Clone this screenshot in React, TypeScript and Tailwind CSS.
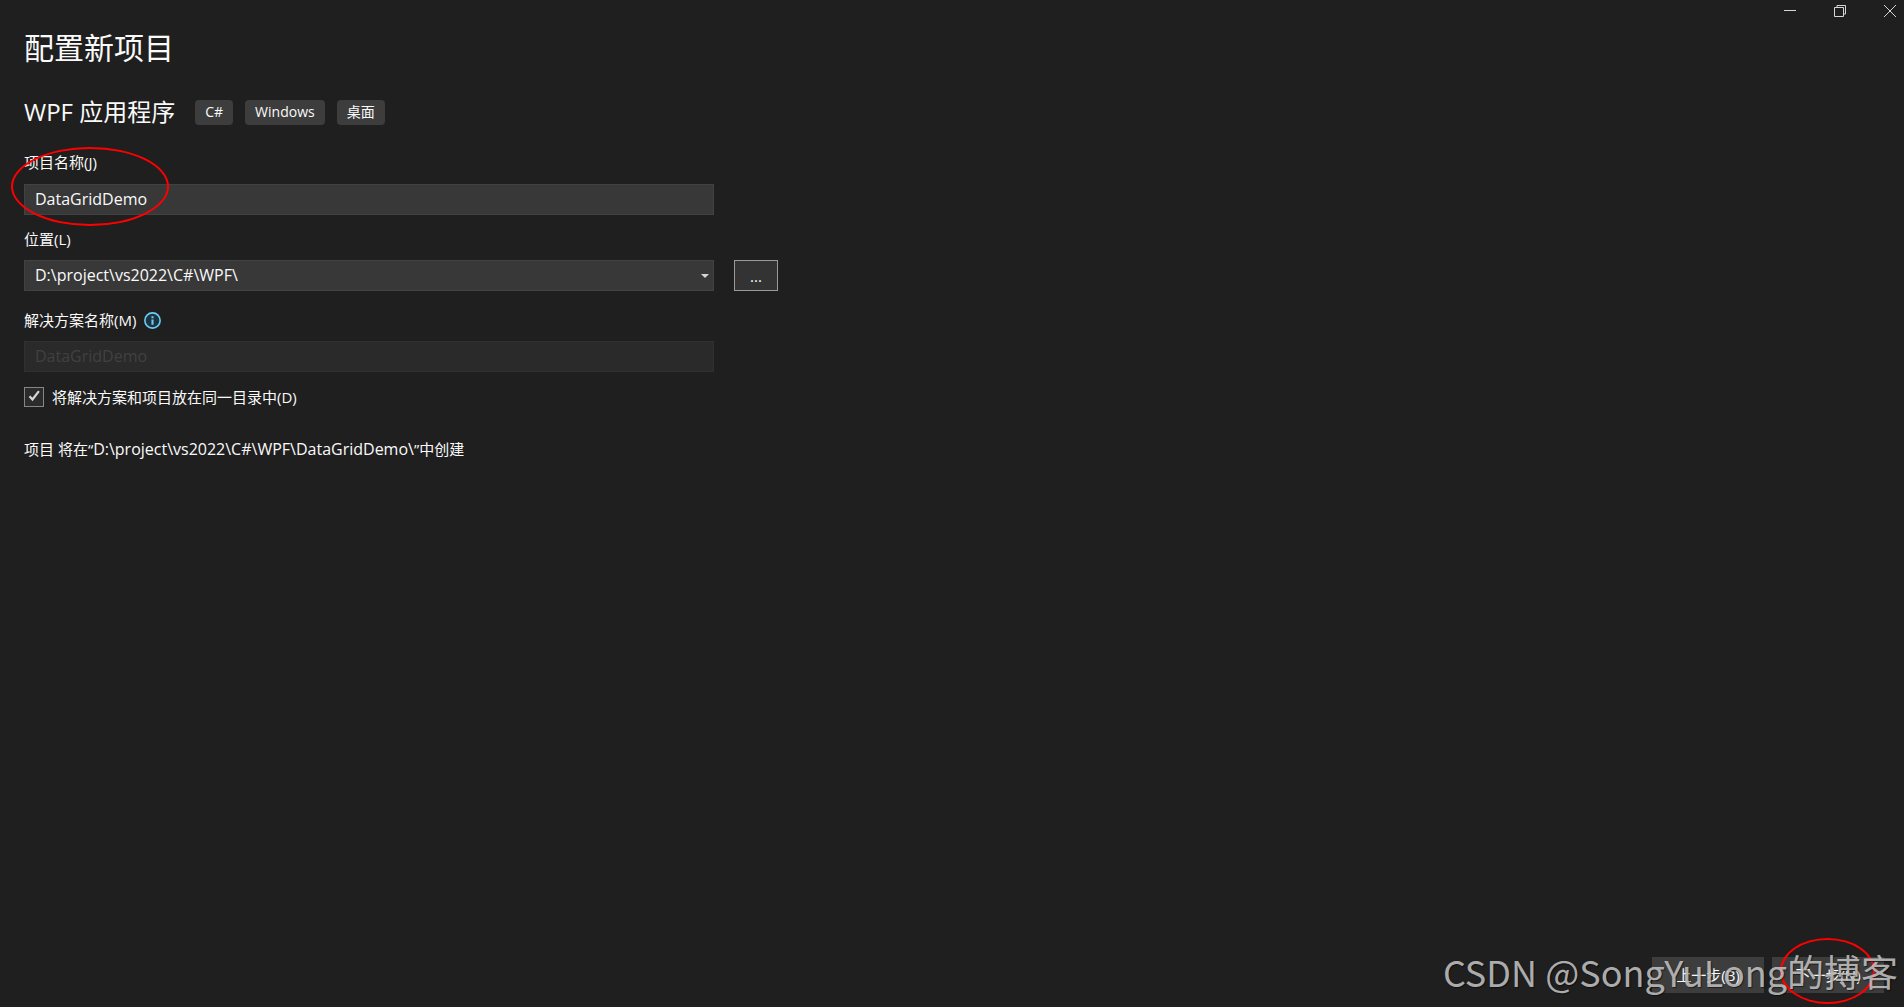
import { useState } from "react";
import type { ReactNode } from "react";

const TAGS = ["C#", "Windows", "桌面"];
const LOCATIONS = ["D:\\project\\vs2022\\C#\\WPF\\"];

const fieldClass =
    "block h-[31px] w-full border border-[#424242] bg-[#383838] px-2.5 pb-0.5 text-base leading-5 text-[#fafafa] outline-none";

function WindowButton({ label, children }: { label: string; children: ReactNode }) {
    return (
        <button type="button" aria-label={label} className="flex h-[22px] w-7 items-center justify-center text-[#d6d6d6] hover:bg-[#3d3d3d]">
            <svg width="12" height="12" viewBox="0 0 12 12" fill="none" stroke="currentColor">
                {children}
            </svg>
        </button>
    );
}

function TitleBar() {
    return (
        <div className="flex h-[22px] justify-end gap-[22px]">
            <WindowButton label="最小化">
                <path d="M0 5.5h12" />
            </WindowButton>
            <WindowButton label="还原">
                <path d="M.5 2.5h9v9h-9zM3 2V.5h8.5v8.5H10" />
            </WindowButton>
            <WindowButton label="关闭">
                <path d="M0 0l12 12M12 0l-12 12" />
            </WindowButton>
        </div>
    );
}

function InfoIcon() {
    return (
        <svg width="17" height="17" viewBox="0 0 16 16" fill="none" aria-hidden="true">
            <circle cx="8" cy="8" r="7.2" fill="#1b3440" stroke="#6ccbf5" strokeWidth="1.5" />
            <path d="M7 4h2v1.8H7zM7 7h2v5H7z" fill="#6ccbf5" />
        </svg>
    );
}

export default function App() {
    const [name, setName] = useState("DataGridDemo");
    const [location, setLocation] = useState(LOCATIONS[0]);
    const [sameFolder, setSameFolder] = useState(true);

    return (
        <div className="relative flex min-h-screen flex-col overflow-hidden bg-[#1f1f1f] font-['Open_Sans','Noto_Sans_CJK_SC',sans-serif] text-[15px] leading-5 text-[#fafafa]">
            <TitleBar />

            <main className="flex-1 px-6 pt-1.5">
                <h1 className="text-[30px] leading-10">配置新项目</h1>

                <div className="mt-6 flex items-center gap-5">
                    <h2 className="text-2xl leading-10">WPF 应用程序</h2>
                    <ul className="flex gap-3">
                        {TAGS.map((tag) => (
                            <li key={tag} className="flex h-[25px] items-center rounded bg-[#3d3d3d] px-2.5 text-sm">
                                {tag}
                            </li>
                        ))}
                    </ul>
                </div>

                <form onSubmit={(e) => e.preventDefault()}>
                    <div className="mt-5 max-w-[690px]">
                        <label htmlFor="project-name" className="block">项目名称(J)</label>
                        <input
                            id="project-name"
                            type="text"
                            value={name}
                            onChange={(e) => setName(e.target.value)}
                            className={`mt-3 ${fieldClass}`}
                        />
                    </div>

                    <label htmlFor="location" className="mt-3.5 block">位置(L)</label>
                    <div className="mt-[11px] flex gap-5">
                        <div className="relative w-full max-w-[690px]">
                            <select
                                id="location"
                                value={location}
                                onChange={(e) => setLocation(e.target.value)}
                                className={`appearance-none ${fieldClass}`}
                            >
                                {LOCATIONS.map((path) => (
                                    <option key={path}>{path}</option>
                                ))}
                            </select>
                            <svg width="8" height="4" viewBox="0 0 8 4" className="pointer-events-none absolute top-3.5 right-[5px]" aria-hidden="true">
                                <path d="M0 0h8L4 4z" fill="#d6d6d6" />
                            </svg>
                        </div>
                        <button type="button" className="h-[31px] w-11 shrink-0 border border-[#9a9a9a] bg-[#333333]">
                            ...
                        </button>
                    </div>

                    <div className="mt-[19px] max-w-[690px]">
                        <div className="flex items-center gap-2">
                            <label htmlFor="solution-name">解决方案名称(M)</label>
                            <InfoIcon />
                        </div>
                        <input
                            id="solution-name"
                            type="text"
                            value={name}
                            disabled
                            readOnly
                            className="mt-[11px] block h-[31px] w-full border border-[#303030] bg-[#2a2a2a] px-2.5 pb-0.5 text-base leading-5 text-[#414141]"
                        />
                    </div>

                    <div className="mt-[15px] flex items-center gap-2">
                        <div className="relative size-5">
                            <input
                                id="same-folder"
                                type="checkbox"
                                checked={sameFolder}
                                onChange={(e) => setSameFolder(e.target.checked)}
                                className="block size-5 appearance-none border border-[#868686] bg-[#2b2b2b]"
                            />
                            {sameFolder && (
                                <svg width="20" height="20" viewBox="0 0 20 20" className="pointer-events-none absolute inset-0" aria-hidden="true">
                                    <path d="M5.5 9.2l3 3.3 6.4-8.4" fill="none" stroke="#d6d6d6" strokeWidth="2.2" />
                                </svg>
                            )}
                        </div>
                        <label htmlFor="same-folder">将解决方案和项目放在同一目录中(D)</label>
                    </div>
                </form>

                <p className="mt-8">
                    项目 将在“<span className="text-base leading-5">{location}{name}\</span>”中创建
                </p>
            </main>

            <footer className="flex justify-end gap-2 px-5 pb-3.5">
                <button type="button" className="h-9 w-28 bg-[#3d3d3d]">上一步(B)</button>
                <button type="button" className="h-9 w-28 bg-[#3d3d3d]">下一步(N)</button>
            </footer>

            {/* hand-drawn highlights */}
            <div className="pointer-events-none absolute top-[147px] left-[11px] h-[79px] w-[158px] rounded-[50%] border-2 border-[#ff0000]" />
            <div className="pointer-events-none absolute right-[29px] bottom-[3px] h-[66px] w-[95px] rounded-[50%] border-2 border-[#ff0000]" />

            <div className="pointer-events-none absolute right-1.5 bottom-[9px] font-['Noto_Sans_CJK_SC',sans-serif] text-[36px] leading-[54px] whitespace-nowrap text-[#c8c8c8]/85 text-shadow-[1px_1px_1px_#00000080]">
                CSDN @SongYuLong<span className="text-[37px]">的搏客</span>
            </div>
        </div>
    );
}
